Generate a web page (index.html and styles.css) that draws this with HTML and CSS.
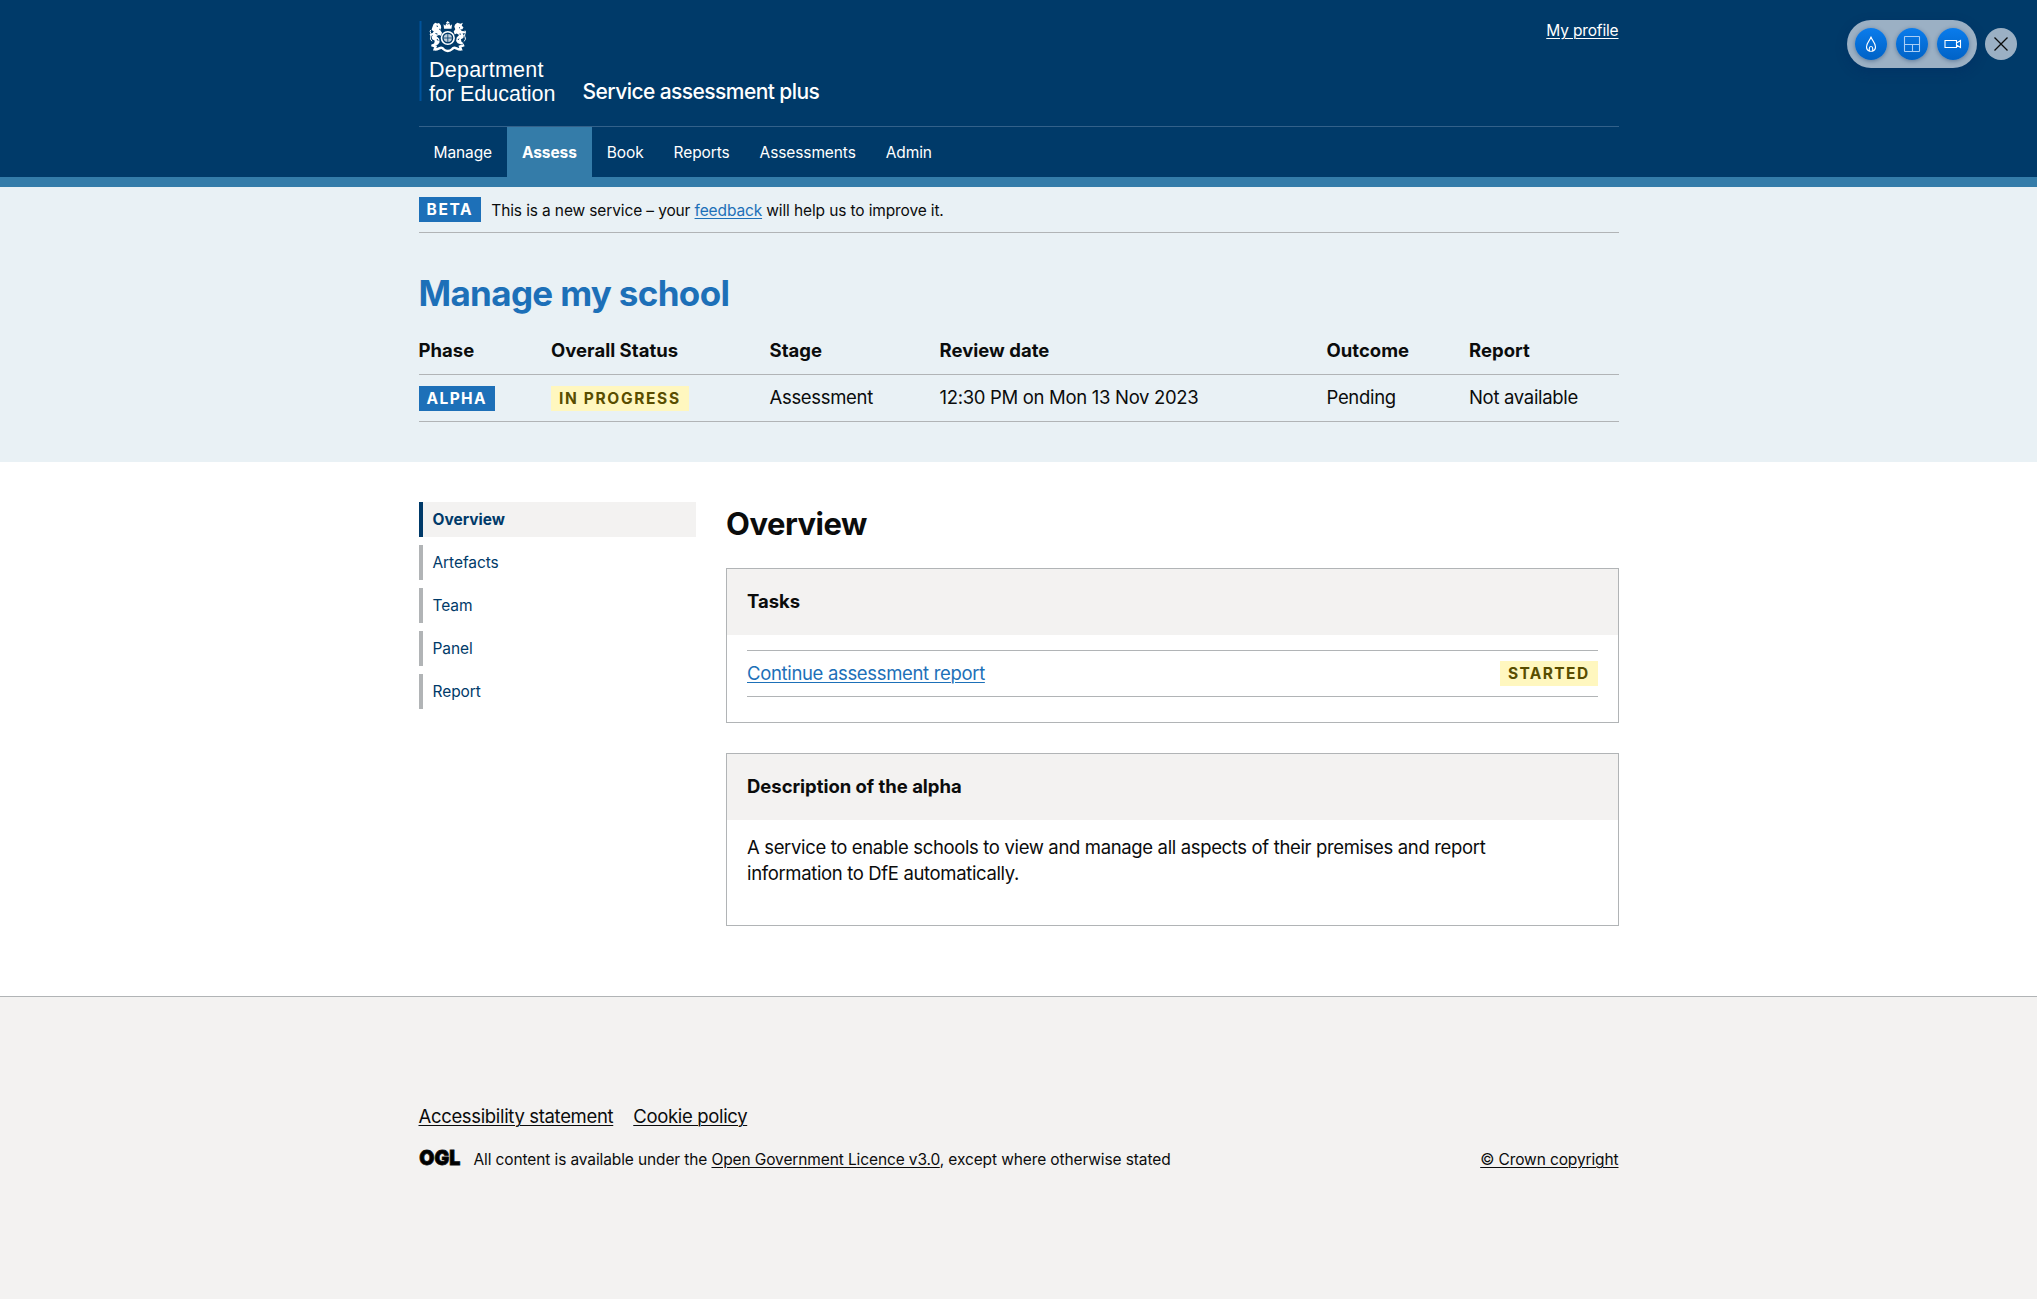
FILE: index.html
```
<!DOCTYPE html>
<html lang="en">
<head>
<meta charset="utf-8">
<title>Manage my school - Service assessment plus</title>
<link rel="stylesheet" href="styles.css">
</head>
<body>
<header class="header">
  <div class="container">
    <div class="header-top">
      <svg class="logo" width="140" height="86" viewBox="0 0 140 86" role="img" aria-label="Department for Education">
        <rect class="logo-bar" x="0.5" y="1" width="2" height="80"/>
        <g class="crest" transform="translate(10 1)">
          <path d="M14.5 3.2l1.8 1.6 1-2.6 1.5 1.6 1.5-1.6 1 2.6 1.8-1.6-.6 4.6h-7.4z"/>
          <path d="M18.3 0h1v3h-1zM17.3 1h3v.9h-3z"/>
          <circle class="belt" cx="18.8" cy="17" r="6.3"/>
          <circle class="shield" cx="18.8" cy="17" r="4.1"/>
          <path class="cut" d="M18.8 13v8M14.7 17h8.2"/>
          <path d="M4.5 3.2l1.7-1.4 2 .6 1.8-.4 1.8 2.2.4 2.6-1 2.3 1.8 2.6-1 3-2-.8-2.6 1.2 2.8 2.6.4 3.6-1.6 2.2-3.6 1.2-2.4-1 2.2-1.4.6-2.6-2.6-1.4-.6-2.2 1.4-2.2-2.6 1-.8-1.6 3-1.4 1.2-1.6-2.2-1.2.4-1.8z"/>
          <path class="tail" d="M1.6 9c-1.6 2.4 1.6 3.6.4 6-1 2-.8 4 1.2 5.2"/>
          <path d="M31.5 2.8l2.4-1-1.2 2.8 1.8 1.8-1.4 2-1.8-.4 1.4 2 3 .2.6 1.8-2.8.4 1.4 2.2-.6 2.4-2.4 1.2.6 2.6 2.2 1.4-2.4 1.2-3.6-1.2-1.6-2.2.6-3.6 2.4-2.4-2.4-1.4-2 1-1-3 1.6-2.4-1-2.4.8-2.4 2.2-1.6z"/>
          <path class="tail" d="M36 9.6c1.8 2.4-1.4 3.6-.2 6 1 2 .8 3.6-1 4.8"/>
          <path class="ribbon" d="M2.4 24.2l4.2 1.4-1 2.8c4 .4 5.6-2.8 7.6-1.4s2 3 5.6 3 3.6-1.6 5.6-3 3.6 1.8 7.6 1.4l-1-2.8 4.2-1.4"/>
          <path class="flaw" d="M7.6 5l1.4.4M6.5 12.5l2 .6M8 18l1.2 1.8M30 6.4l1 .8M30.5 13l1.4.2M29 19l1-1.4M10.2 8.5l.8-.6"/>
        </g>
        <text class="logo-text" x="10" y="57" textLength="114.5">Department</text>
        <text class="logo-text" x="10" y="80.5" textLength="126.5">for Education</text>
      </svg>
      <span class="service-name">Service assessment plus</span>
      <a class="profile-link" href="#">My profile</a>
    </div>
    <nav class="nav">
      <a class="nav-item" href="#">Manage</a>
      <a class="nav-item nav-item-current" href="#">Assess</a>
      <a class="nav-item" href="#">Book</a>
      <a class="nav-item" href="#">Reports</a>
      <a class="nav-item" href="#">Assessments</a>
      <a class="nav-item" href="#">Admin</a>
    </nav>
  </div>
</header>

<section class="summary">
  <div class="container">
    <div class="phase-banner">
      <strong class="tag tag-blue tag-wide">BETA</strong>
      <span class="phase-text">This is a new service – your <a class="link" href="#">feedback</a> will help us to improve it.</span>
    </div>
    <h1 class="title">Manage my school</h1>
    <div class="status-row status-head">
      <span>Phase</span><span>Overall Status</span><span>Stage</span><span>Review date</span><span>Outcome</span><span>Report</span>
    </div>
    <div class="status-row">
      <span class="tag-cell"><strong class="tag tag-blue">ALPHA</strong></span>
      <span class="tag-cell"><strong class="tag tag-yellow tag-wide">IN PROGRESS</strong></span>
      <span>Assessment</span><span>12:30 PM on Mon 13 Nov 2023</span><span>Pending</span><span>Not available</span>
    </div>
  </div>
</section>

<main class="container main">
  <nav class="side-nav">
    <a class="side-item side-item-current" href="#">Overview</a>
    <a class="side-item" href="#">Artefacts</a>
    <a class="side-item" href="#">Team</a>
    <a class="side-item" href="#">Panel</a>
    <a class="side-item" href="#">Report</a>
  </nav>
  <div class="content">
    <h2 class="heading">Overview</h2>
    <section class="card">
      <h3 class="card-head">Tasks</h3>
      <div class="card-body tasks">
        <div class="task">
          <a class="link" href="#">Continue assessment report</a>
          <strong class="tag tag-yellow">STARTED</strong>
        </div>
      </div>
    </section>
    <section class="card">
      <h3 class="card-head">Description of the alpha</h3>
      <div class="card-body description">
        <p class="description-text">A service to enable schools to view and manage all aspects of their premises and report information to DfE automatically.</p>
      </div>
    </section>
  </div>
</main>

<footer class="footer">
  <div class="container">
    <div class="footer-links">
      <a class="footer-link" href="#">Accessibility statement</a>
      <a class="footer-link" href="#">Cookie policy</a>
    </div>
    <div class="footer-meta">
      <svg class="ogl" width="42" height="20" viewBox="0 0 42 20" role="img" aria-label="Open Government Licence">
        <text class="ogl-text" x="0.3" y="15.8" textLength="41" lengthAdjust="spacingAndGlyphs">OGL</text>
      </svg>
      <span>All content is available under the <a class="footer-link" href="#">Open Government Licence v3.0</a>, except where otherwise stated</span>
      <a class="footer-link copyright" href="#">© Crown copyright</a>
    </div>
  </div>
</footer>

<div class="toolbar">
  <div class="toolbar-pill">
    <button class="tool" aria-label="Flame">
      <svg width="16" height="18" viewBox="0 0 16 18"><path d="M8 1.5C8 4.5 3.5 7.500 3.500 12c0 2 1.300 3.700 3 4.200h3c1.700-.5 3-2.200 3-4.200C12.500 7.500 8 4.500 8 1.500z"/><path d="M6.300 16v-2.500c0-1.200.7-2 1.700-2s1.700.8 1.700 2V16"/></svg>
    </button>
    <button class="tool tool-soft" aria-label="Layout">
      <svg width="18" height="18" viewBox="0 0 18 18"><path d="M2 1.500h14a.5.5 0 0 1 .5.500v14a.5.500 0 0 1-.5.500H2a.5.500 0 0 1-.5-.5V2a.5.500 0 0 1 .5-.5zM1.500 9.500h15M9.500 9.500v7"/></svg>
    </button>
    <button class="tool" aria-label="Video">
      <svg width="18" height="18" viewBox="0 0 18 18"><path d="M1 5.500h11.500v7H1zM12.500 8l4-2.500v7l-4-2.500"/></svg>
    </button>
  </div>
  <button class="close" aria-label="Close">
    <svg width="16" height="16" viewBox="0 0 16 16"><path d="M1.500 1.500l13 13M14.500 1.500l-13 13"/></svg>
  </button>
</div>
</body>
</html>
```
FILE: styles.css
```
* { box-sizing: border-box; }

body {
  margin: 0;
  background: #fff;
  color: #0b0c0c;
  font-family: Inter, "Liberation Sans", sans-serif;
  font-size: 18.5px;
  letter-spacing: -0.018em;
  line-height: 25px;
}

h1, h2, h3, p { margin: 0; }

a {
  text-decoration-thickness: 1px;
  text-underline-offset: 2px;
}

.container { width: 1200px; margin: 0 auto; }
.link { color: #1d70b8; }

/* Header */
.header { background: #003a69; border-bottom: 10px solid #347ca9; }
.header-top { display: flex; height: 126px; padding-top: 20px; }
.logo { flex: none; }
.logo-bar { fill: #00539c; }
.logo-text { fill: #fff; font: 21.5px "Liberation Sans", Arial, sans-serif; letter-spacing: 0; }
.crest { fill: #fff; }
.crest .belt { fill: none; stroke: #fff; stroke-width: 1.6; }
.crest .shield { fill: #fff; fill-opacity: .75; }
.crest .cut { fill: none; stroke: #003a69; stroke-width: .8; }
.crest .flaw { fill: none; stroke: #003a69; stroke-width: 1; }
.crest .tail { fill: none; stroke: #fff; stroke-width: 1; }
.crest .ribbon { fill: none; stroke: #fff; stroke-width: 2.4; }
.service-name {
  margin: 56.5px 0 0 24px;
  color: #fff;
  font-size: 21px;
  font-weight: 500;
  line-height: 30px;
  letter-spacing: -0.027em;
}
.profile-link {
  margin-left: auto;
  padding-top: 1px;
  color: #fff;
  font-size: 15.5px;
  line-height: 20px;
  letter-spacing: -0.01em;
}

.nav { display: flex; border-top: 1px solid #33618a; }
.nav-item {
  height: 50px;
  padding: 0 15px;
  color: #fff;
  font-size: 15.5px;
  line-height: 52px;
  letter-spacing: -0.007em;
  text-decoration: none;
}
.nav-item-current { background: #347ca9; font-weight: 700; letter-spacing: -0.006em; }

/* Tags */
.tag {
  display: inline-block;
  height: 25px;
  padding: 0 8px;
  font-size: 15.5px;
  font-weight: 700;
  line-height: 25px;
  letter-spacing: 1.4px;
}
.tag-blue { background: #1d70b8; color: #fff; }
.tag-yellow { background: #fff7bf; color: #594d00; }
.tag-wide { letter-spacing: 1.65px; }

/* Service summary */
.summary { height: 275px; background: #e9f1f5; }
.phase-banner {
  display: flex;
  gap: 10px;
  height: 46px;
  padding: 10px 0;
  border-bottom: 1px solid #b1b4b6;
}
.phase-text { padding-top: 1px; font-size: 15.5px; letter-spacing: -0.0083em; }
.title {
  padding: 40px 0 15px;
  color: #1d70b8;
  font-size: 35px;
  font-weight: 700;
  line-height: 40px;
  letter-spacing: -0.019em;
}
.status-row {
  display: grid;
  grid-template-columns: 132.5px 218.5px 170px 387px 142.5px 1fr;
  height: 47px;
  padding-top: 10px;
  border-bottom: 1px solid #b1b4b6;
  letter-spacing: -0.017em;
}
.status-head { font-weight: 700; letter-spacing: 0.001em; }
.tag-cell { padding-top: 1px; line-height: 0; }

/* Main */
.main { display: flex; gap: 30px; height: 534px; padding-top: 40px; }
.side-nav { display: flex; flex-direction: column; gap: 8px; width: 277.5px; }
.side-item {
  padding-left: 10px;
  border-left: 4px solid #b1b4b6;
  color: #003a69;
  font-size: 15.5px;
  line-height: 35px;
  letter-spacing: -0.005em;
  text-decoration: none;
}
.side-item-current {
  background: #f3f2f1;
  border-color: #003a69;
  font-weight: 700;
  letter-spacing: 0;
}
.content { flex: 1; padding-top: 4px; }
.heading {
  margin-bottom: 27px;
  font-size: 31px;
  font-weight: 700;
  line-height: 35px;
  letter-spacing: -0.016em;
}
.card { margin-bottom: 30px; border: 1px solid #b1b4b6; }
.card-head {
  padding: 20px 20px 21px;
  background: #f3f2f1;
  font-size: 18.5px;
  font-weight: 700;
  letter-spacing: -0.002em;
}
.card-body { padding: 0 20px; }
.tasks { padding-top: 15px; padding-bottom: 25px; }
.task {
  display: flex;
  justify-content: space-between;
  padding: 10px 0;
  border: solid #b1b4b6;
  border-width: 1px 0;
}
.description { padding-top: 14px; padding-bottom: 39px; }
.description-text { max-width: 780px; line-height: 26px; letter-spacing: -0.019em; }

/* Footer */
.footer {
  height: 303px;
  padding-top: 107px;
  border-top: 1px solid #b1b4b6;
  background: #f3f2f1;
}
.footer-link { color: #0b0c0c; }
.footer-links { display: flex; gap: 20px; margin-bottom: 20px; }
.footer-meta {
  display: flex;
  font-size: 15.5px;
  line-height: 22px;
  letter-spacing: -0.0075em;
}
.ogl { margin-right: 13px; overflow: visible; }
.ogl-text { font: 900 20.5px Inter, sans-serif; stroke: #0b0c0c; stroke-width: .8; letter-spacing: 0; }
.copyright { margin-left: auto; }

/* Floating recorder toolbar */
.toolbar { position: absolute; top: 20px; right: 20px; display: flex; align-items: center; gap: 8px; }
.toolbar-pill {
  display: flex;
  gap: 9px;
  padding: 8px;
  border-radius: 24px;
  background: #9bb0c4;
  box-shadow: 0 4px 12px rgba(0, 30, 90, .25);
}
.tool, .close {
  display: grid;
  place-items: center;
  width: 32px;
  height: 32px;
  padding: 0;
  border: 0;
  border-radius: 50%;
}
.tool {
  background: linear-gradient(#0a7cec, #0062c6);
  box-shadow: 0 1px 4px rgba(0, 40, 90, .4);
}
.tool svg { fill: none; stroke: #fff; stroke-width: 1.1; }
.tool-soft svg { stroke: #a9cdf5; }
.close { background: #9bb0c4; }
.close svg { fill: none; stroke: #0b0c0c; stroke-width: 1.3; }
```
